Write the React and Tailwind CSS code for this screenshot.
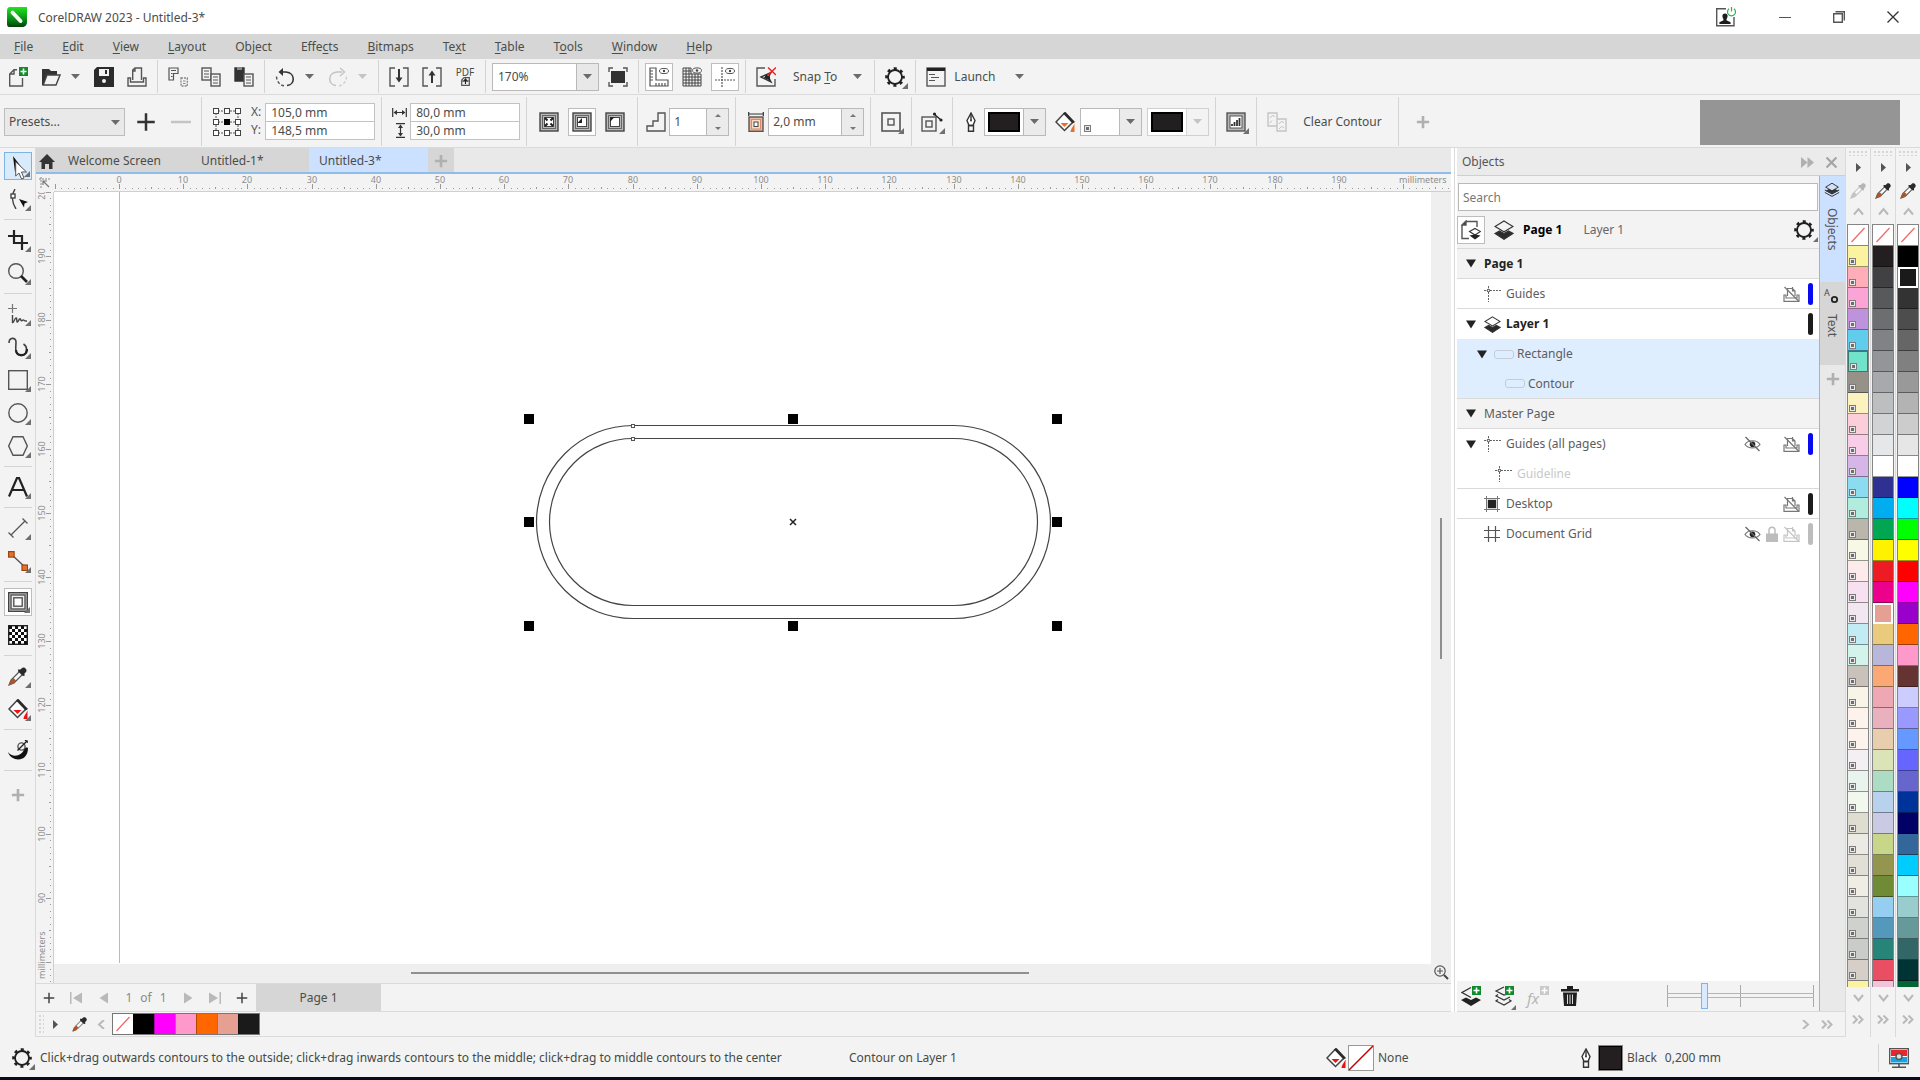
import React from "react";

const Svg = ({ w = 20, h = 20, children, className = "" }) => (
  <svg
    width={w}
    height={h}
    viewBox={`0 0 ${w} ${h}`}
    fill="none"
    stroke="#555"
    strokeWidth="1.4"
    className={"shrink-0 " + className}
    aria-hidden="true"
  >
    {children}
  </svg>
);

const Corner = () => (
  <svg width="6" height="6" className="absolute bottom-0.5 right-px" aria-hidden="true">
    <path d="M6 0V6H0Z" fill="#6f6f6f" />
  </svg>
);

const Down = ({ light, className = "" }) => (
  <svg width="9" height="5" className={"shrink-0 " + className} aria-hidden="true">
    <path d="M0 0H9L4.500 5Z" fill={light ? "#c4c4c4" : "#6b6b6b"} />
  </svg>
);

const Btn = ({ label, active, corner, children }) => (
  <button
    type="button"
    aria-label={label}
    className={
      "relative flex size-7 shrink-0 items-center justify-center " +
      (active === "blue"
        ? "border border-[#7db4e6] bg-[#d9eafb]"
        : active
          ? "border border-[#bdbdbd] bg-white"
          : "")
    }
  >
    {children}
    {corner && <Corner />}
  </button>
);

const ArrowBtn = ({ label, light }) => (
  <button type="button" aria-label={label} className="flex h-7 w-5 items-center justify-center">
    <Down light={light} />
  </button>
);

const Sep = () => (
  <div className="flex w-[3px] shrink-0 justify-center self-stretch py-px">
    <div className="w-px bg-[#d4d4d4]" />
  </div>
);

/* ---------- icons ---------- */
const Gear = ({ s = 20 }) => (
  <svg width={s} height={s} viewBox="0 0 20 20" fill="none" stroke="#1f1f1f" aria-hidden="true">
    <circle cx="10" cy="10" r="7" strokeWidth="1.8" />
    <circle cx="10" cy="10" r="8.4" strokeWidth="2.8" strokeDasharray="3 3.597" strokeDashoffset="1.5" />
  </svg>
);
const Dropper = ({ s = 20, light }) => {
  const d = light ? "#b5b5b5" : "#2b2b2b";
  return (
    <svg width={s} height={s} viewBox="0 0 20 20" fill="none" aria-hidden="true">
      <path d="M12 5L3 14L1 19L6 17L15 8Z" fill="#f6f6f6" stroke={light ? "#c4c4c4" : "#555"} strokeWidth="1.2" />
      <path d="M5.500 12L8 14.500L5.500 17.200L1 19L2.800 14.500Z" fill={light ? "#c4c4c4" : "#b3541e"} />
      <path d="M10 3.500L12.500 3.500L14 2C16 0 20 3.500 18 6L16.500 7.500V10L14.500 9.800L10.200 5.500Z" fill={d} />
    </svg>
  );
};
const Bucket = ({ s = 20, color = "#e11" }) => (
  <svg width={s} height={s} viewBox="0 0 20 20" fill="none" aria-hidden="true">
    <path d="M9.500 1L18 10L9.500 18.500L1 10Z" fill="#fff" stroke="#444" strokeWidth="1.5" />
    <path d="M8 1.500L10.500 0L20 10L17.500 11.500Z" fill="#2b2b2b" />
    <path d="M5.500 11H13.500L9.500 15Z" fill={color} />
    <path d="M19.500 11.500V20H15.500C15.500 17 18 15 19.500 11.500Z" fill={color} />
  </svg>
);
const Pen = () => (
  <Svg w={12} h={20}>
    <path d="M6 1L2 8.500L4 13.500H8L10 8.500Z" fill="#fff" stroke="#333" />
    <path d="M6 1V8" stroke="#333" />
    <circle cx="6" cy="8.500" r="1" fill="#333" stroke="none" />
    <path d="M3.500 13.500H8.500V19.300H3.500Z" stroke="#333" />
  </Svg>
);
const Layers = ({ s = 20, all, lines }) => (
  <svg width={s} height={s} viewBox="0 0 20 20" fill="none" stroke="#333" strokeWidth="1.2" aria-hidden="true">
    {lines ? (
      <>
        <path d="M1 13L10 18L19 13M1 10L10 15L19 10" />
        <path d="M3 11L10 7.500L17 11L10 14.500Z" fill="#333" />
        <path d="M10 1.500L18 6.500L10 11L2 6.500Z" fill="#cfe1fb" />
      </>
    ) : (
      <>
        <path d="M1 13.500L5.500 11L10 13.500L14.500 11L19 13.500L10 19.300Z" fill="#2b2b2b" />
        <path d="M10 1L19 6.500L10 11.800L1 6.500Z" fill={all ? "#f3f3f3" : "#fff"} />
      </>
    )}
  </svg>
);
const Plus = ({ s = 16, c = "#b0b0b0", w = 3 }) => (
  <svg width={s} height={s} viewBox="0 0 16 16" stroke={c} strokeWidth={w} aria-hidden="true">
    <path d="M8 1V15M1 8H15" />
  </svg>
);
const GreenPlus = ({ x = 11, y = 0, c = "#118a2c" }) => (
  <>
    <rect x={x} y={y} width="9" height="9" fill={c} stroke="none" />
    <path d={`M${x + 4.5} ${y + 1.5}V${y + 7.5}M${x + 1.5} ${y + 4.5}H${x + 7.5}`} stroke="#fff" strokeWidth="1.6" />
  </>
);
const PageLines = ({ x, y, fill = "#f3f3f3" }) => (
  <>
    <rect x={x} y={y} width="9" height="12" fill={fill} stroke="#555" />
    <path d={`M${x + 2} ${y + 3}H${x + 7}M${x + 2} ${y + 6}H${x + 7}M${x + 2} ${y + 9}H${x + 7}`} strokeWidth="1" />
  </>
);
const Contour = ({ kind }) => (
  <Svg>
    <rect x="1" y="1" width="18" height="18" fill="#b9b9b9" stroke="#444" />
    <rect x="3.500" y="3.500" width="13" height="13" fill="#b9b9b9" stroke="#666" strokeWidth="1" />
    <rect x="5.500" y="5.500" width="9" height="9" fill="#fff" stroke="#444" strokeWidth="1" />
    {kind === "center" && (
      <path d="M6 6L8.500 8.500M14 6L11.500 8.500M6 14L8.500 11.500M14 14L11.500 11.500" stroke="#222" strokeWidth="2" />
    )}
    {kind === "inside" && <path d="M5.500 11H10V6Z" fill="#222" stroke="none" />}
    {kind === "outside" && <path d="M5 5H9.500L5 10Z" fill="#222" stroke="none" />}
  </Svg>
);
const Eye = () => (
  <Svg w={17} h={16}>
    <path d="M1 8.500C4 3.500 13 3.500 16 8.500C13 13 4 13 1 8.500Z" stroke="#777" strokeWidth="1.200" />
    <circle cx="8.500" cy="8.200" r="2.800" fill="#222" stroke="none" />
    <path d="M1.500 1L15.500 15" stroke="#666" strokeWidth="1.200" />
  </Svg>
);
const Lock = () => (
  <Svg w={12} h={16}>
    <path d="M3 8V4.500C3 0 9 0 9 4.500V8" stroke="#bdbdbd" strokeWidth="1.500" />
    <rect x="0" y="7.500" width="12" height="8.500" fill="#bdbdbd" stroke="none" />
  </Svg>
);
const NoPrint = ({ light }) => (
  <Svg w={17} h={16}>
    <g stroke={light ? "#c4c4c4" : "#777"} strokeWidth="1.200">
      <path d="M4.500 10V2.500H9.500L12 5V10M9.500 1V5H12" />
      <path d="M1 9H3V12H14V9H16V15.300H1Z" />
      <path d="M1.500 1L15.500 15" />
    </g>
  </Svg>
);
const Guide = () => (
  <Svg w={17} h={16}>
    <path d="M0 4.500H17" stroke="#666" strokeWidth="1" strokeDasharray="2 1" />
    <path d="M4.500 0V16" stroke="#666" strokeWidth="1" strokeDasharray="2 1" />
    <circle cx="4.500" cy="4.500" r="1.300" fill="#fff" stroke="#333" strokeWidth="1" />
  </Svg>
);
const GridIc = () => (
  <Svg w={17} h={16}>
    <path d="M0 4.500H16M0 11.500H16M4.500 0V16M11.500 0V16" stroke="#555" strokeWidth="1.200" />
  </Svg>
);
const DesktopIc = () => (
  <Svg w={17} h={16}>
    <path d="M0 2.500H16M0 13.500H16M2.500 0V16M13.500 0V16" stroke="#777" strokeWidth="1" />
    <rect x="4.500" y="4.500" width="7" height="7" fill="#222" stroke="#222" />
  </Svg>
);
const ObjRect = () => <span className="h-[9px] w-5 shrink-0 rounded-[3px] border border-[#c3ccd8]" />;

const SpotMark = () => (
  <span className="flex size-[7px] items-center justify-center self-end border border-[#7c7c7c] bg-[#e9e9e9]">
    <span className="size-[3px] bg-[#6e6e6e]" />
  </span>
);

/* ---------- top bars ---------- */
function TitleBar() {
  return (
    <header className="flex h-[34px] shrink-0 items-center bg-white pl-[7px]">
      <svg width="20" height="20" viewBox="0 0 20 20" aria-hidden="true">
        <defs>
          <linearGradient id="logo" x1="0" y1="0" x2="0" y2="1">
            <stop offset="0" stopColor="#1fe51f" />
            <stop offset="0.600" stopColor="#078f17" />
            <stop offset="1" stopColor="#03400b" />
          </linearGradient>
        </defs>
        <path d="M3 0H20V15C20 18 18 20 15 20H2C1 20 0 19 0 17V4C0 1.500 1 0 3 0Z" fill="url(#logo)" />
        <path d="M5.500 5.500L13.500 14" stroke="#f4fff2" strokeWidth="4" strokeLinecap="round" />
      </svg>
      <h1 className="ml-[11px] flex-1 pt-px">CorelDRAW 2023 - Untitled-3*</h1>
      <button type="button" aria-label="Account" className="mr-3 flex w-10 justify-center">
        <Svg w={22} h={20}>
          <path d="M11 1.700H1.700V18.700H19V10" stroke="#555" />
          <path d="M10 6.500a2.600 2.600 0 0 1 2.600 2.600c0 2-1.200 2.800-1.200 4.200l4.200 2v1.700H4.400v-1.700l4.200-2c0-1.400-1.200-2.200-1.200-4.200A2.600 2.600 0 0 1 10 6.500Z" fill="#1d1d1d" stroke="none" />
          <path d="M14 1.800a4 4 0 1 0 5 0M16.500 0V4.500" stroke="#2fae4f" strokeWidth="1.200" />
        </Svg>
      </button>
      <button type="button" aria-label="Minimize" className="flex h-full w-[54px] items-center justify-center">
        <Svg w={12} h={12}>
          <path d="M0 6.500H12" strokeWidth="1" />
        </Svg>
      </button>
      <button type="button" aria-label="Restore" className="flex h-full w-[54px] items-center justify-center">
        <Svg w={12} h={12}>
          <path d="M0.700 2.700H9.300V11.300H0.700ZM2.500 0.700H11.300V9.500" />
        </Svg>
      </button>
      <button type="button" aria-label="Close" className="flex h-full w-[54px] items-center justify-center">
        <Svg w={12} h={12}>
          <path d="M0.500 0.500L11.500 11.500M11.500 0.500L0.500 11.500" stroke="#333" strokeWidth="1.300" />
        </Svg>
      </button>
    </header>
  );
}

const menus = [
  ["", "F", "ile"],
  ["", "E", "dit"],
  ["", "V", "iew"],
  ["", "L", "ayout"],
  ["Ob", "j", "ect"],
  ["Effe", "c", "ts"],
  ["", "B", "itmaps"],
  ["Te", "x", "t"],
  ["", "T", "able"],
  ["T", "o", "ols"],
  ["", "W", "indow"],
  ["", "H", "elp"],
];

function MenuBar() {
  return (
    <nav className="flex h-[25px] shrink-0 items-center gap-[29px] bg-[#d6d6d6] pl-3.5 pt-px">
      {menus.map(([a, k, b]) => (
        <button type="button" key={a + k + b}>
          {a}
          <span className="underline underline-offset-2">{k}</span>
          {b}
        </button>
      ))}
    </nav>
  );
}

function StandardBar() {
  return (
    <div className="flex h-9 shrink-0 items-center gap-[5px] border-b border-[#dadada] pl-1">
      <Btn label="New">
        <Svg>
          <path d="M9 2.700H6L1.700 7V19H14.500V11M6 3V7H2" />
          <GreenPlus />
        </Svg>
      </Btn>
      <div className="flex">
        <Btn label="Open">
          <Svg>
            <path d="M1 18V2H8L10 4H16V8H6L2.500 18Z" fill="#333" stroke="none" />
            <path d="M6 8H19L15 18H2.200Z" fill="#f3f3f3" stroke="#444" />
          </Svg>
        </Btn>
        <ArrowBtn label="Recent files" />
      </div>
      <Btn label="Save">
        <Svg>
          <path d="M3 0H20V20H0V3Z" fill="#2b2b2b" stroke="none" />
          <path d="M5 2H15V9H5Z" fill="#f3f3f3" stroke="none" />
          <rect x="11" y="3" width="2" height="4" fill="#2b2b2b" stroke="none" />
          <circle cx="10" cy="14" r="2" fill="#f3f3f3" stroke="none" />
        </Svg>
      </Btn>
      <Btn label="Print">
        <Svg>
          <path d="M5.700 13V3L8 1H14.500V13M8 1V4H6" />
          <path d="M1 11H3.500V15H16.500V11H19V19H1Z" />
        </Svg>
      </Btn>
      <Sep />
      <Btn label="Cut">
        <Svg>
          <path d="M1 1H10V6.500H5.500V13H1ZM3 3.500H8M3 6.500H4.500M3 9.500H4.500" strokeWidth="1.200" />
          <path d="M13 11H19.300V19H13Z" stroke="#888" strokeDasharray="2 1" />
          <path d="M15 14H17.500M15 16.500H17.500" stroke="#888" strokeWidth="1" />
        </Svg>
      </Btn>
      <Btn label="Copy">
        <Svg>
          <PageLines x={1} y={1} />
          <PageLines x={10} y={7} />
        </Svg>
      </Btn>
      <Btn label="Paste">
        <Svg>
          <path d="M1 1H10V14H1Z" fill="#333" stroke="#333" />
          <rect x="3" y="0" width="5" height="3" fill="#888" stroke="none" />
          <PageLines x={10} y={7} />
        </Svg>
      </Btn>
      <Sep />
      <div className="flex">
        <Btn label="Undo">
          <Svg>
            <path d="M6 5H11C21 6 20 18 12 18.500" stroke="#333" strokeWidth="1.600" />
            <path d="M8 1L3.500 5L8 9Z" fill="#333" stroke="none" />
            <path d="M1.500 9.500C1.500 14 5 18.500 9 18.800" strokeDasharray="3 2" />
          </Svg>
        </Btn>
        <ArrowBtn label="Undo history" />
      </div>
      <div className="flex">
        <Btn label="Redo">
          <Svg>
            <path d="M14 5H9C-1 6 0 18 8 18.500" stroke="#c4c4c4" strokeWidth="1.600" />
            <path d="M12 1L16.500 5L12 9" stroke="#c4c4c4" />
            <path d="M18.500 9.500C18.500 14 15 18.500 11 18.800" stroke="#cfcfcf" strokeDasharray="3 2" />
          </Svg>
        </Btn>
        <ArrowBtn label="Redo history" light />
      </div>
      <Sep />
      <Btn label="Import">
        <Svg>
          <path d="M6 1H1V19H6M14 1H19V19H14" />
          <path d="M10 2V12" stroke="#333" strokeWidth="2" />
          <path d="M6.500 10.500H13.500L10 15.500Z" fill="#333" stroke="none" />
        </Svg>
      </Btn>
      <Btn label="Export">
        <Svg>
          <path d="M6 1H1V19H6M14 1H19V19H14" />
          <path d="M10 16V7" stroke="#333" strokeWidth="2" />
          <path d="M6.500 8.500H13.500L10 3.500Z" fill="#333" stroke="none" />
        </Svg>
      </Btn>
      <button type="button" aria-label="Publish to PDF" className="flex size-7 shrink-0 flex-col items-center justify-center text-[10px] leading-[10px]">
        PDF
        <Svg w={9} h={9}>
          <path d="M3 0.700H8.300V8.300H0.700V3ZM0.700 4H8" strokeWidth="1.200" />
          <path d="M4.500 2V7M2.500 4.500L4.500 2L6.500 4.500" stroke="#222" strokeWidth="1.200" />
        </Svg>
      </button>
      <Sep />
      <div className="relative w-[107px]">
        <select aria-label="Zoom level" className="h-7 w-full appearance-none border border-[#b9b9b9] bg-white pl-[5px]">
          <option>170%</option>
        </select>
        <span className="pointer-events-none absolute inset-y-px right-px flex w-[22px] items-center justify-center border-l border-[#b9b9b9] bg-[#e8e8e8]">
          <Down />
        </span>
      </div>
      <Btn label="Full screen preview">
        <Svg>
          <rect x="3" y="4" width="14" height="12" fill="#333" stroke="none" />
          <path d="M5 1H1V5M15 1H19V5M5 19H1V15M15 19H19V15" />
        </Svg>
      </Btn>
      <Sep />
      <Btn label="Show rulers" active>
        <Svg>
          <path d="M1 1H7V13H19V19H1ZM1 4H4M1 7H4M1 10H4M1 13H4M7 19V16M10 19V16M13 19V16M16 19V16" strokeWidth="1.200" />
          <ellipse cx="15" cy="4" rx="4.500" ry="2.600" strokeWidth="1" />
          <circle cx="15" cy="4" r="1.200" fill="#444" stroke="none" />
        </Svg>
      </Btn>
      <Btn label="Show grid">
        <Svg>
          <path d="M1 1H9V7H19V19H1ZM1 4H9M1 7H9M1 10H19M1 13H19M1 16H19M4 1V19M7 1V19M10 7V19M13 7V19M16 7V19" stroke="#444" strokeWidth="1" />
          <ellipse cx="15" cy="3.500" rx="4.500" ry="2.600" strokeWidth="1" />
          <circle cx="15" cy="3.500" r="1.200" fill="#444" stroke="none" />
        </Svg>
      </Btn>
      <Btn label="Show guidelines" active>
        <Svg>
          <path d="M7 0V20M0 13H20" strokeDasharray="2 1" strokeWidth="1.200" />
          <ellipse cx="15" cy="4" rx="4.500" ry="2.600" strokeWidth="1" />
          <circle cx="15" cy="4" r="1.200" fill="#444" stroke="none" />
        </Svg>
      </Btn>
      <Sep />
      <Btn label="Snap off">
        <Svg>
          <path d="M9 1H1V19H19V12" />
          <path d="M5 10L15 5.500L12.500 10L15 15Z" fill="#f3f3f3" stroke="#333" />
          <path d="M10 7.500L14 9.500V13.500L8 11Z" fill="#222" stroke="none" />
          <path d="M12 0.500L20 8M20 0.500L12 8" stroke="#e22" />
        </Svg>
      </Btn>
      <button type="button" className="flex h-7 items-center gap-4 pl-2 pr-1.5">
        <span>
          Snap <span className="underline underline-offset-2">T</span>o
        </span>
        <Down />
      </button>
      <Sep />
      <Btn label="Options" corner>
        <Gear />
      </Btn>
      <Sep />
      <button type="button" className="flex h-7 items-center gap-2 pl-1">
        <Svg>
          <rect x="1" y="1" width="18" height="18" />
          <path d="M1 2.500H19" stroke="#222" strokeWidth="3" />
          <path d="M3 7.500H9M5 10.500H13M3 13.500H9" strokeWidth="1.200" />
        </Svg>
        Launch
        <Down className="ml-3" />
      </button>
    </div>
  );
}

const Field = ({ label, value }) => (
  <input
    aria-label={label}
    defaultValue={value}
    className="h-[19px] w-[110px] border border-[#c3c3c3] bg-white pl-[5px] leading-4 outline-none"
  />
);

const Spinner = ({ label, value, w }) => (
  <div className="flex h-7 border border-[#b9b9b9]">
    <input aria-label={label} defaultValue={value} className={w + " bg-white pl-1 outline-none"} />
    <div className="flex w-[22px] flex-col border-l border-[#b9b9b9] bg-[#ebebeb]">
      <button type="button" aria-label={label + " up"} className="flex flex-1 items-center justify-center">
        <svg width="6" height="3" aria-hidden="true">
          <path d="M0 3H6L3 0Z" fill="#777" />
        </svg>
      </button>
      <button type="button" aria-label={label + " down"} className="flex flex-1 items-center justify-center">
        <svg width="6" height="3" aria-hidden="true">
          <path d="M0 0H6L3 3Z" fill="#777" />
        </svg>
      </button>
    </div>
  </div>
);

const ColorCombo = ({ label, none, disabled }) => (
  <button type="button" aria-label={label} className={"flex h-7 w-[62px] shrink-0 border bg-white " + (disabled ? "border-[#d0d0d0]" : "border-[#b9b9b9]")}>
    <span className="flex flex-1 self-stretch p-[3px]">
      {none ? <SpotMark /> : <span className="flex-1 border-2 border-black bg-[#231f20]" />}
    </span>
    <span className={"flex w-[22px] items-center justify-center self-stretch border-l " + (disabled ? "border-[#d8d8d8] bg-[#f3f3f3]" : "border-[#b9b9b9] bg-[#ebebeb]")}>
      <Down light={disabled} />
    </span>
  </button>
);

function PropertyBar() {
  return (
    <div className="flex h-[53px] shrink-0 items-center gap-[5px] border-b border-[#dadada] pl-1 pt-px">
      <div className="relative w-[121px] shrink-0">
        <select aria-label="Presets" className="h-7 w-full appearance-none border border-[#bdbdbd] bg-[#e9e9e9] pl-1">
          <option>Presets...</option>
        </select>
        <Down className="pointer-events-none absolute right-[5px] top-3" />
      </div>
      <button type="button" aria-label="Add preset" className="flex size-8 items-center justify-center">
        <Plus s={20} c="#333" w={2} />
      </button>
      <button type="button" aria-label="Delete preset" className="flex size-7 items-center justify-center">
        <Svg>
          <path d="M0 10H20" stroke="#c4c4c4" strokeWidth="2.500" />
        </Svg>
      </button>
      <Sep />
      <button type="button" aria-label="Object origin" className="ml-1 mr-1 flex size-[30px] shrink-0 items-center justify-center">
        <Svg w={30} h={30}>
          <path d="M3 4H27M3 15H27M3 26H27M4 3V27M26 3V27" strokeWidth="1" strokeDasharray="2 1" />
          {[1, 12, 23].map((x) =>
            [1, 12, 23].map((y) => (
              <rect key={x + "-" + y} x={x + 0.5} y={y + 0.5} width="5" height="5" fill={x === 12 && y === 12 ? "#000" : "#fff"} stroke={x === 12 && y === 12 ? "#000" : "#444"} strokeWidth="1" />
            )),
          )}
        </Svg>
      </button>
      <div className="flex gap-1">
        <div className="flex flex-col text-[#555]">
          <span className="flex h-[18px] items-center">X:</span>
          <span className="flex h-[18px] items-center">Y:</span>
        </div>
        <div className="flex flex-col -space-y-px">
          <Field label="X position" value="105,0 mm" />
          <Field label="Y position" value="148,5 mm" />
        </div>
      </div>
      <Sep />
      <div className="flex gap-0.5 pl-1">
        <div className="flex w-4 flex-col">
          <span className="flex h-[18px] items-center">
            <Svg w={15} h={9}>
              <path d="M0.700 0V9M14.300 0V9M2 4.500H13" stroke="#333" strokeWidth="1.200" />
              <path d="M5 2V7L1.500 4.500ZM10 2V7L13.500 4.500Z" fill="#333" stroke="none" />
            </Svg>
          </span>
          <span className="flex h-[18px] items-center justify-center">
            <Svg w={9} h={15}>
              <path d="M0 0.700H9M0 14.300H9M4.500 2V13" stroke="#333" strokeWidth="1.200" />
              <path d="M2 5H7L4.500 1.500ZM2 10H7L4.500 13.500Z" fill="#333" stroke="none" />
            </Svg>
          </span>
        </div>
        <div className="flex flex-col -space-y-px">
          <Field label="Width" value="80,0 mm" />
          <Field label="Height" value="30,0 mm" />
        </div>
      </div>
      <Sep />
      <div className="flex gap-[5px] px-0.5">
        <Btn label="To center">
          <Contour kind="center" />
        </Btn>
        <Btn label="Inside contour" active>
          <Contour kind="inside" />
        </Btn>
        <Btn label="Outside contour">
          <Contour kind="outside" />
        </Btn>
      </div>
      <Sep />
      <div className="ml-0.5 flex items-center gap-[3px]">
        <Svg>
          <path d="M1 19V14H7V9H12V1H19V19Z" />
        </Svg>
        <Spinner label="Contour steps" value="1" w="w-9" />
      </div>
      <Sep />
      <div className="ml-1.5 flex items-center gap-1">
        <Svg w={16}>
          <path d="M0.700 0V4M15.300 0V4M1 2H15" stroke="#333" strokeWidth="1.200" />
          <rect x="1" y="5" width="14" height="14.300" fill="#f0b79c" stroke="#555" />
          <rect x="3.500" y="7.500" width="9" height="9.500" fill="#f8dccb" stroke="#d98c66" strokeWidth="1" />
          <rect x="6" y="10" width="4" height="4.500" fill="#fff" stroke="#444" strokeWidth="1" />
        </Svg>
        <Spinner label="Contour offset" value="2,0 mm" w="w-[72px]" />
      </div>
      <Sep />
      <Btn label="Contour corners" corner>
        <Svg>
          <rect x="1" y="1" width="18" height="18" strokeWidth="1.600" />
          <rect x="7" y="7" width="6" height="6" />
        </Svg>
      </Btn>
      <Sep />
      <Btn label="Object and color acceleration" corner>
        <Svg w={22}>
          <rect x="1" y="5" width="14" height="14" />
          <rect x="5" y="9" width="6" height="6" />
          <path d="M13 2L20 8" stroke="#222" />
          <circle cx="13.500" cy="2" r="1.600" fill="#222" stroke="none" />
          <circle cx="20" cy="8" r="1.600" fill="#222" stroke="none" />
        </Svg>
      </Btn>
      <Sep />
      <div className="flex items-center gap-[5px] pl-1">
        <span className="flex w-4 justify-center">
          <Pen />
        </span>
        <ColorCombo label="Outline color" />
        <span className="ml-1">
          <Bucket color="#e8702a" />
        </span>
        <ColorCombo label="Fill color" none />
        <ColorCombo label="Last fill color" disabled />
      </div>
      <Sep />
      <Btn label="Copy contour properties" corner>
        <Svg>
          <rect x="1" y="1" width="18" height="18" fill="#b5b5b5" stroke="#555" />
          <rect x="4" y="4" width="12" height="12" fill="#fff" stroke="#555" strokeWidth="1" />
          <path d="M6 14V12M8.500 14V10M11 14V8M13.500 14V6" stroke="#333" strokeWidth="1.800" />
        </Svg>
      </Btn>
      <Sep />
      <button type="button" className="flex h-7 items-center gap-4 pl-1 pr-2.5">
        <Svg>
          <path d="M1 1H10V14H1ZM10 7H19V19H10Z" stroke="#c4c4c4" />
          <path d="M3 6L5 3.500L8 4.500M3 11L5 8.500M12 12L14 9.500L17 10.500M12 17L14.500 14.500L17 15.500" stroke="#c4c4c4" strokeWidth="1" />
        </Svg>
        Clear Contour
      </button>
      <Sep />
      <button type="button" aria-label="Customize toolbar" className="ml-1 flex size-7 items-center justify-center">
        <Plus s={14} />
      </button>
      <div className="ml-auto mr-5 mt-0.5 h-[45px] w-[200px] bg-[#959595]" />
    </div>
  );
}

/* ---------- toolbox ---------- */
const Cursor = () => (
  <svg width="13" height="19" viewBox="0 0 13 19" className="absolute left-2.5 top-2" aria-hidden="true">
    <path d="M0.700 0.700V15L4 12L6.500 18L9 17L6.500 11H11.500Z" fill="#fff" stroke="#555" strokeWidth="1" />
  </svg>
);

function HSep() {
  return (
    <div className="flex h-[3px] w-7 shrink-0 items-center">
      <div className="h-px w-full bg-[#d4d4d4]" />
    </div>
  );
}

function Toolbox() {
  return (
    <aside className="flex w-9 shrink-0 flex-col items-center gap-[5px] border-r border-[#dadada] pt-1">
      <Btn label="Pick tool" active="blue" corner>
        <Svg>
          <path d="M5 0L14 12L9.500 11.500L7 16Z" fill="#111" stroke="none" />
        </Svg>
        <Cursor />
      </Btn>
      <Btn label="Shape tool" corner>
        <Svg>
          <path d="M7 0C3 6 4 14 8 20" stroke="#444" />
          <rect x="3" y="5" width="4" height="4" fill="#fff" stroke="#444" />
          <path d="M11 10L20 13L16.500 14.500L16 18.500Z" fill="#111" stroke="none" />
        </Svg>
      </Btn>
      <HSep />
      <Btn label="Crop tool" corner>
        <Svg>
          <path d="M6 0V13H20M0 6H14V20" stroke="#222" strokeWidth="2.200" />
        </Svg>
      </Btn>
      <Btn label="Zoom tool" corner>
        <Svg>
          <circle cx="8" cy="8" r="7.300" />
          <path d="M13 13L19 19" stroke="#222" strokeWidth="2.600" />
        </Svg>
      </Btn>
      <HSep />
      <Btn label="Freehand tool" corner>
        <Svg>
          <path d="M4.500 0V9M0 4.500H9" stroke="#777" strokeWidth="1.200" />
          <path d="M4.500 11V18.500C6 19 7 13 8.500 14C9 15 8.500 18.500 9.500 18C11 17 11 14 12.500 15C13 17 13.500 17.500 15 16C16 15.500 16 17.500 19 17" stroke="#444" />
        </Svg>
      </Btn>
      <Btn label="Artistic media tool" corner>
        <Svg>
          <path d="M1 6C1 0 8 0 8 5C8 10 6 18 12.500 18.500C19 19 20.500 10 15.500 7" strokeWidth="1.600" stroke="#444" />
          <path d="M8 13C8.500 20 19 20 19 12" strokeWidth="2.200" stroke="#222" />
        </Svg>
      </Btn>
      <Btn label="Rectangle tool" corner>
        <Svg>
          <rect x="0.700" y="0.700" width="18.600" height="18.600" />
        </Svg>
      </Btn>
      <Btn label="Ellipse tool" corner>
        <Svg>
          <circle cx="10" cy="10" r="9.200" />
        </Svg>
      </Btn>
      <Btn label="Polygon tool" corner>
        <Svg>
          <path d="M5 0.700H15L19.300 10L15 19.300H5L0.700 10Z" />
        </Svg>
      </Btn>
      <HSep />
      <Btn label="Text tool" corner>
        <Svg>
          <path d="M1 19.500L9 1H11L19 19.500M4 13H16" stroke="#222" strokeWidth="2.200" />
        </Svg>
      </Btn>
      <HSep />
      <Btn label="Dimension tool" corner>
        <Svg>
          <path d="M3 17L17 3M0.500 14.500L5.500 19.500M14.500 0.500L19.500 5.500" strokeWidth="1.300" />
        </Svg>
      </Btn>
      <Btn label="Connector tool" corner>
        <Svg>
          <path d="M4 4L17 16" />
          <rect x="0.600" y="0.600" width="5.500" height="5.500" fill="#e8702a" stroke="#9a4614" strokeWidth="1.200" />
          <rect x="14" y="14" width="5.500" height="5.500" fill="#e8702a" stroke="#9a4614" strokeWidth="1.200" />
        </Svg>
      </Btn>
      <HSep />
      <Btn label="Contour tool" active corner>
        <Svg>
          <rect x="0.700" y="0.700" width="18.600" height="18.600" fill="#ccc" stroke="#444" />
          <rect x="3" y="3" width="14" height="14" fill="#eee" stroke="#555" />
          <rect x="5.800" y="5.800" width="8.400" height="8.400" fill="#fff" stroke="#555" />
        </Svg>
      </Btn>
      <Btn label="Transparency tool">
        <Svg>
          <rect x="0.700" y="0.700" width="18.600" height="18.600" fill="#fff" stroke="#222" />
          {[0, 1, 2, 3, 4, 5].map((r) =>
            [0, 1, 2].map((c) => (
              <rect key={r + "-" + c} x={1 + c * 6 + (r % 2) * 3} y={1 + r * 3} width="3" height="3" fill="#111" stroke="none" />
            )),
          )}
        </Svg>
      </Btn>
      <HSep />
      <Btn label="Eyedropper tool" corner>
        <Dropper />
      </Btn>
      <Btn label="Interactive fill tool" corner>
        <Bucket />
      </Btn>
      <HSep />
      <Btn label="Smart drawing tool">
        <Svg>
          <path d="M0 12C3 22 20 23 20 8C18 7 17 8 16 9C15 15 5 19 0 12Z" fill="#111" stroke="none" />
          <circle cx="13.500" cy="6.500" r="3.600" />
          <path d="M19.500 0.500L9.500 10.500M17 0L20 2.500" stroke="#222" />
        </Svg>
      </Btn>
      <HSep />
      <button type="button" aria-label="Customize toolbox" className="flex h-9 w-7 items-center justify-center">
        <Plus s={14} />
      </button>
    </aside>
  );
}

/* ---------- document area ---------- */
const MM = 6.42;

function Tabs() {
  return (
    <div role="tablist" className="flex h-[26px] shrink-0 border-b-2 border-[#8fbdea] bg-[#e9e9e9]">
      <button type="button" aria-label="Home" className="flex w-[22px] items-center justify-center bg-[#d6d6d6] pt-0.5">
        <svg width="16" height="15" viewBox="0 0 16 15" aria-hidden="true">
          <path d="M8 0L16 8H13.500V15H10V10H6V15H2.500V8H0Z" fill="#333" />
        </svg>
      </button>
      <button type="button" role="tab" className="w-[133px] bg-[#d6d6d6] pl-2.5 pt-0.5 text-left">Welcome Screen</button>
      <button type="button" role="tab" className="w-[118px] bg-[#d6d6d6] pl-2.5 pt-0.5 text-left">Untitled-1*</button>
      <button type="button" role="tab" aria-selected="true" className="w-[119px] bg-[#cce0ff] pl-2.5 pt-0.5 text-left">Untitled-3*</button>
      <button type="button" aria-label="New document" className="flex w-[26px] items-center justify-center bg-[#d6d6d6] pt-0.5">
        <Plus s={14} />
      </button>
    </div>
  );
}

function HRuler() {
  const ticks = Array.from({ length: 220 }, (_, i) => i - 10);
  return (
    <svg className="h-[18px] min-w-0 flex-1 border-b border-[#cfcfcf] bg-[#f3f3f3]" aria-label="Horizontal ruler">
      {ticks.map((mm) => {
        const x = Math.round(65 + mm * MM);
        const h = mm % 10 === 0 ? 5 : mm % 5 === 0 ? 2 : 1;
        return <rect key={mm} x={x} y={15 - h} width="1" height={h} fill="#9a9a9a" />;
      })}
      {Array.from({ length: 20 }, (_, i) => i * 10).map((v) => (
        <text key={v} x={Math.round(65 + v * MM)} y="9" textAnchor="middle" fontSize="9" fill="#8e8e8e">
          {v}
        </text>
      ))}
      <text x="1345" y="9" fontSize="9" fill="#8e8e8e">millimeters</text>
    </svg>
  );
}

function VRuler() {
  const y = (v) => Math.round(64 + (190 - v) * MM);
  const ticks = Array.from({ length: 125 }, (_, i) => 200 - i);
  return (
    <svg className="w-[18px] shrink-0 border-r border-[#cfcfcf] bg-[#f3f3f3]" aria-label="Vertical ruler">
      {ticks.map((mm) => {
        const w = mm % 10 === 0 ? 5 : mm % 5 === 0 ? 2 : 1;
        return <rect key={mm} x={15 - w} y={y(mm)} width={w} height="1" fill="#9a9a9a" />;
      })}
      {Array.from({ length: 12 }, (_, i) => 200 - i * 10).map((v) => (
        <text key={v} transform={`translate(9 ${y(v)}) rotate(-90)`} textAnchor="middle" fontSize="9" fill="#8e8e8e">
          {v}
        </text>
      ))}
      <text transform="translate(9 787) rotate(-90)" fontSize="9" fill="#8e8e8e">millimeters</text>
    </svg>
  );
}

function Artboard() {
  const handles = [
    [475, 227], [739, 227], [1003, 227],
    [475, 330], [1003, 330],
    [475, 434], [739, 434], [1003, 434],
  ];
  return (
    <svg className="min-h-0 min-w-0 flex-1 bg-white" aria-label="Drawing page">
      <rect x="65" y="0" width="1" height="771" fill="#b9b9b9" />
      <rect x="482.500" y="233.500" width="514" height="193" rx="96.500" fill="none" stroke="#444" strokeWidth="1.200" />
      <rect x="495.500" y="246.500" width="488" height="167" rx="83.500" fill="none" stroke="#444" strokeWidth="1.200" />
      <rect x="577.500" y="232.500" width="3" height="3" fill="#fff" stroke="#555" />
      <rect x="577.500" y="245.500" width="3" height="3" fill="#fff" stroke="#555" />
      {handles.map(([x, y]) => (
        <rect key={x + "-" + y} x={x - 5} y={y - 5} width="10" height="10" fill="#000" />
      ))}
      <path d="M736 327L742 333M742 327L736 333" stroke="#222" strokeWidth="1.500" />
    </svg>
  );
}

const NavIc = ({ d, label, w }) => (
  <button type="button" aria-label={label} className={w + " flex h-7 items-center justify-center"}>
    <svg width="12" height="12" viewBox="0 0 12 12" aria-hidden="true">
      <path d={d} fill="#b9b9b9" stroke="none" />
    </svg>
  </button>
);

function PageNav() {
  return (
    <div className="flex h-[29px] shrink-0 items-center border-y border-[#dadada]">
      <button type="button" aria-label="Add page before" className="flex h-7 w-[26px] items-center justify-center">
        <Plus s={12} c="#444" w={2} />
      </button>
      <NavIc label="First page" w="w-7" d="M0 0H1.500V12H0ZM12 0.500V11.500L3 6Z" />
      <NavIc label="Previous page" w="w-7" d="M10 0.500V11.500L1.500 6Z" />
      <div className="flex w-14 justify-center gap-2 text-[#8a8a8a]">
        <span>1</span>
        <span>of</span>
        <span>1</span>
      </div>
      <NavIc label="Next page" w="w-7" d="M2 0.500V11.500L10.500 6Z" />
      <NavIc label="Last page" w="w-[26px]" d="M12 0H10.500V12H12ZM0 0.500V11.500L9 6Z" />
      <button type="button" aria-label="Add page after" className="flex h-7 w-7 items-center justify-center">
        <Plus s={12} c="#444" w={2} />
      </button>
      <button type="button" className="h-full w-[125px] bg-[#d6d6d6]">Page 1</button>
    </div>
  );
}

function Workspace() {
  return (
    <main className="flex min-w-0 flex-1 flex-col">
      <Tabs />
      <div className="flex shrink-0">
        <div className="flex w-[18px] shrink-0 items-center justify-center">
          <Svg w={12} h={12}>
            <path d="M0 2H12M2 0V12" strokeDasharray="2 1" strokeWidth="1" stroke="#888" />
            <path d="M4 4L10 10M4 8V4H8" strokeWidth="1.200" stroke="#777" />
          </Svg>
        </div>
        <HRuler />
      </div>
      <div className="flex min-h-0 flex-1">
        <VRuler />
        <div className="flex min-w-0 flex-1 flex-col">
          <div className="flex min-h-0 flex-1">
            <Artboard />
            <div className="flex w-5 shrink-0 justify-center bg-[#efefef] pt-[326px]">
              <div className="h-[141px] w-0.5 bg-[#8f8f8f]" />
            </div>
          </div>
          <div className="flex h-[19px] shrink-0 items-center bg-[#efefef] pb-0.5">
            <div className="ml-[357px] h-0.5 w-[618px] bg-[#8f8f8f]" />
            <button type="button" aria-label="Navigator" className="ml-auto flex w-5 justify-center">
              <Svg w={15} h={15}>
                <circle cx="6" cy="6" r="5.200" strokeWidth="1.200" />
                <path d="M10 10L14 14" stroke="#444" strokeWidth="2" />
                <path d="M6 3V9M3 6H9" strokeWidth="1.200" />
              </Svg>
            </button>
          </div>
        </div>
      </div>
      <PageNav />
    </main>
  );
}

/* ---------- objects docker ---------- */
const Tri = () => (
  <svg width="10" height="9" className="shrink-0" aria-hidden="true">
    <path d="M0 0.500H10L5 8.500Z" fill="#222" />
  </svg>
);

const rows = [
  { t: "Page 1", head: true, bold: true, line: true },
  { t: "Guides", pad: "pl-[27px]", icon: <Guide />, print: true, bar: "bg-[#0a0af0]", line: true },
  { t: "Layer 1", pad: "pl-[9px]", tri: true, icon: <Layers s={17} />, bold: true, bar: "bg-[#1c1c1c]" },
  { t: "Rectangle", pad: "pl-5", tri: true, icon: <ObjRect />, sel: true },
  { t: "Contour", pad: "pl-12", icon: <ObjRect />, sel: true, line: true },
  { t: "Master Page", head: true, line: true },
  { t: "Guides (all pages)", pad: "pl-[9px]", tri: true, icon: <Guide />, eye: true, print: true, bar: "bg-[#0a0af0]" },
  { t: "Guideline", pad: "pl-[38px]", icon: <Guide />, dim: true, line: true },
  { t: "Desktop", pad: "pl-[27px]", icon: <DesktopIc />, print: true, bar: "bg-[#1c1c1c]", line: true },
  { t: "Document Grid", pad: "pl-[27px]", icon: <GridIc />, eye: true, lock: true, print: true, light: true, bar: "bg-[#bdbdbd]" },
];

function Row({ r }) {
  return (
    <li
      className={
        "flex h-[30px] items-center pr-1.5 " +
        (r.line ? "border-b border-[#dadada] " : "") +
        (r.sel ? "bg-[#dfeeff] " : r.head ? "bg-[#f3f3f3] " : "") +
        (r.head ? "pl-[9px]" : r.pad)
      }
    >
      {(r.tri || r.head) && (
        <button type="button" aria-label={"Collapse " + r.t} className={r.sel ? "mr-[7px]" : "mr-2"}>
          <Tri />
        </button>
      )}
      <span className={"flex items-center " + (r.sel ? "gap-[3px]" : "gap-[5px]")}>
        {r.icon}
        <span className={r.bold ? "font-bold text-[#222]" : r.dim ? "text-[#c9c9c9]" : "text-[#5c5c5c]"}>{r.t}</span>
      </span>
      <span className="ml-auto flex items-center">
        {r.eye && <Eye />}
        {r.eye && <span className="mx-[5px] flex w-3">{r.lock && <Lock />}</span>}
        {r.print && <NoPrint light={r.light} />}
        {r.bar && <span className={"ml-2 h-[22px] w-[5px] rounded-full " + r.bar} />}
      </span>
    </li>
  );
}

function ObjectsDocker() {
  return (
    <section className="flex w-[394px] shrink-0 border-l border-white bg-white">
      <div className="ml-0.5 mr-0.5 w-px shrink-0 bg-[#dadada]" />
      <div className="flex min-w-0 flex-1 flex-col border-b border-[#dadada]">
        <div className="flex h-7 shrink-0 items-center border-b border-[#cfcfcf] bg-[#ebebeb] pl-[5px] pr-2 pt-px">
          <h2 className="flex-1 text-[#555]">Objects</h2>
          <button type="button" aria-label="Collapse docker" className="mr-3">
            <svg width="13" height="11" aria-hidden="true">
              <path d="M0 0L6.500 5.500L0 11ZM6.500 0L13 5.500L6.500 11Z" fill="#b0b0b0" />
            </svg>
          </button>
          <button type="button" aria-label="Close docker">
            <svg width="11" height="11" stroke="#a5a5a5" strokeWidth="2.200" aria-hidden="true">
              <path d="M0.500 0.500L10.500 10.500M10.500 0.500L0.500 10.500" />
            </svg>
          </button>
        </div>
        <div className="flex min-h-0 flex-1">
          <div className="flex min-w-0 flex-1 flex-col">
            <div className="shrink-0 bg-[#f3f3f3] px-px pt-[7px]">
              <input aria-label="Search" placeholder="Search" className="h-7 w-full border border-[#b9b9b9] bg-white pl-1 outline-none placeholder:text-[#777]" />
            </div>
            <div className="flex h-[38px] shrink-0 items-center border-b border-[#dadada] bg-[#f3f3f3] pr-[3px] pt-px">
              <Btn label="Show pages and layers" active>
                <Svg>
                  <path d="M1 5V18.500H8M5 1.500H16V7" />
                  <path d="M1 5L5 1V5Z" fill="#333" />
                  <path d="M14 8.500L19.500 11.500L14 15L8.500 11.500Z" strokeWidth="1.100" stroke="#333" />
                  <path d="M8.500 15.500L14 14.500L19.500 15.500L14 19.500Z" fill="#222" stroke="none" />
                </Svg>
              </Btn>
              <span className="mx-[9px]">
                <Layers all />
              </span>
              <span className="font-bold text-black">Page 1</span>
              <span className="ml-[21px] flex-1 text-[#666]">Layer 1</span>
              <button type="button" aria-label="Docker options" className="relative pr-0.5">
                <Gear />
                <svg width="5" height="5" className="absolute -bottom-0.5 -right-0.5" aria-hidden="true">
                  <path d="M5 0V5H0Z" fill="#6f6f6f" />
                </svg>
              </button>
            </div>
            <ul className="min-h-0 flex-1 overflow-hidden bg-white">
              {rows.map((r) => (
                <Row key={r.t} r={r} />
              ))}
            </ul>
            <div className="flex h-[30px] shrink-0 items-center gap-[13px] bg-[#f3f3f3] pl-1 pr-[5px]">
              <button type="button" aria-label="New layer">
                <Svg>
                  <path d="M10 1.500L1 6.500L10 11.500" stroke="#333" />
                  <path d="M0 14L5 11.500L10 14L15 11.500L20 14L10 20Z" fill="#222" stroke="none" />
                  <GreenPlus />
                </Svg>
              </button>
              <button type="button" aria-label="New master layer" className="relative">
                <Svg>
                  <path d="M10 1L2 5L10 9L14 8M4 8.500L2 10L10 14L16 11M4 13.500L2 15L10 19L17 15L15 13.500" stroke="#333" strokeWidth="1.200" />
                  <GreenPlus />
                </Svg>
                <svg width="5" height="5" className="absolute -bottom-1 -right-0.5" aria-hidden="true">
                  <path d="M5 0V5H0Z" fill="#6f6f6f" />
                </svg>
              </button>
              <button type="button" aria-label="Add effect" className="relative h-5 w-5 text-left text-[15px] italic leading-6 text-[#b5b5b5]">
                <span>fx</span>
                <svg width="9" height="9" className="absolute -right-0.5 top-0" aria-hidden="true">
                  <GreenPlus x={0} c="#c9c9c9" />
                </svg>
              </button>
              <button type="button" aria-label="Delete" className="ml-px">
                <Svg w={18}>
                  <path d="M0 3H18V5.500H0ZM6 0H12V3H6ZM2 6.500H16L15 20H3Z" fill="#1f1f1f" stroke="none" />
                  <path d="M6.500 8.500V18M9 8.500V18M11.500 8.500V18" stroke="#ddd" strokeWidth="1" />
                </Svg>
              </button>
              <div className="relative ml-auto flex h-[22px] w-[147px] items-center justify-between">
                <span className="h-full w-px bg-[#a9a9a9]" />
                <span className="h-full w-px bg-[#a9a9a9]" />
                <span className="h-full w-px bg-[#a9a9a9]" />
                <span className="absolute inset-x-0 top-2 h-[5px] border-y border-[#b5b5b5]" />
                <input
                  type="range"
                  aria-label="Thumbnail size"
                  defaultValue="24"
                  className="absolute inset-x-0 -top-0.5 h-[26px] w-full appearance-none bg-transparent [&::-webkit-slider-thumb]:h-[26px] [&::-webkit-slider-thumb]:w-[7px] [&::-webkit-slider-thumb]:appearance-none [&::-webkit-slider-thumb]:border [&::-webkit-slider-thumb]:border-[#7db4f0] [&::-webkit-slider-thumb]:bg-[#d9eaff]"
                />
              </div>
            </div>
          </div>
          <div className="flex w-[26px] shrink-0 flex-col border-l border-[#86b9ee] bg-[#e9e9e9]">
            <button type="button" className="flex h-[106px] flex-col items-center gap-2.5 bg-[#cce0ff] pr-0.5 pt-1.5">
              <Layers s={16} lines />
              <span className="text-[#555] [writing-mode:vertical-rl]">Objects</span>
            </button>
            <button type="button" className="flex h-[83px] flex-col items-center gap-2.5 bg-[#d6d6d6] pr-0.5 pt-1.5">
              <span className="flex">
                <span className="text-[9px] leading-[9px]">A</span>
                <Svg w={9} h={16}>
                  <circle cx="4.500" cy="11.500" r="2.700" stroke="#222" strokeWidth="1.800" />
                </Svg>
              </span>
              <span className="text-[#555] [writing-mode:vertical-rl]">Text</span>
            </button>
            <button type="button" aria-label="Add docker" className="flex h-7 items-center justify-center">
              <Plus s={14} />
            </button>
          </div>
        </div>
      </div>
    </section>
  );
}

/* ---------- color palettes ---------- */
const paletteA = ["#fcf3a0", "#ffadb9", "#faa5d6", "#bd93de", "#60cdec", "#70e3ca", "#979289", "#fbf2c0", "#fcced9", "#f9cce8", "#d6b6e8", "#8cdcf1", "#b0eddf", "#bab6ab", "#f7f8e5", "#fdeaea", "#f7e0ef", "#f0e7f1", "#c1ecf3", "#d2f4ea", "#c8c2ba", "#f8f5e8", "#fdf2ec", "#fdf3ed", "#f3eff2", "#eaf4ef", "#f3f8ef", "#deddd0", "#eceae5", "#e2dfd7", "#f0ede5", "#e2e3df", "#cfd1cd", "#c9ccc9", "#d6cfc8", "#fcf3a0"];
const paletteB = ["#231f20", "#414042", "#58595b", "#6d6e71", "#808285", "#939598", "#a7a9ac", "#bcbec0", "#d1d3d4", "#e6e7e8", "#ffffff", "#2e3192", "#00aeef", "#00a651", "#fff200", "#ed1c24", "#ec008c", "#e5a093", "#eacb7e", "#b9b6dc", "#faa874", "#eea8b3", "#e8b1bd", "#e9ceae", "#dbe4b6", "#acdcc4", "#b8d2ed", "#cacae4", "#c8d68a", "#94954f", "#6f8b35", "#96cef2", "#5499bc", "#278478", "#ea4e63", "#f0c4da"];
const paletteC = ["#000000", "#1a1a1a", "#333333", "#4d4d4d", "#666666", "#808080", "#999999", "#b3b3b3", "#cccccc", "#e6e6e6", "#ffffff", "#0000ff", "#00ffff", "#00ff00", "#ffff00", "#ff0000", "#ff00ff", "#9900cc", "#ff6600", "#ff99cc", "#663333", "#ccccff", "#9999ff", "#6699ff", "#6666ff", "#6666cc", "#003399", "#000066", "#336699", "#00ccff", "#99ffff", "#99cccc", "#669999", "#336666", "#003333", "#006633"];

const Grip = ({ className }) => (
  <div aria-hidden="true" className={className + " bg-[radial-gradient(#d6d6d6_1px,transparent_1px)] bg-[size:4px_4px]"} />
);

const Chev = ({ d, label, h, w = 11 }) => (
  <button type="button" aria-label={label} className={h + " flex w-full shrink-0 items-center justify-center"}>
    <svg width={w} height="9" viewBox={`0 0 ${w} 9`} fill="none" stroke="#b9b9b9" strokeWidth="2" aria-hidden="true">
      <path d={d} />
    </svg>
  </button>
);

function Palette({ colors, marks, light, selected, name }) {
  return (
    <aside aria-label={name} className="flex w-[25px] shrink-0 flex-col items-center border-l border-[#dadada] pt-0.5">
      <Grip className="h-1.5 w-5 shrink-0" />
      <button type="button" aria-label={name + " menu"} className="flex h-[22px] shrink-0 items-center">
        <svg width="5" height="9" aria-hidden="true">
          <path d="M0 0V9L5 4.500Z" fill="#555" />
        </svg>
      </button>
      <button type="button" aria-label={name + " eyedropper"} className="flex h-6 shrink-0 items-center">
        <Dropper s={17} light={light} />
      </button>
      <div className="h-[22px] w-full shrink-0 pb-0.5">
        <Chev label="Scroll up" h="h-[18px]" d="M1 7.500L5.500 2L10 7.500" />
      </div>
      <div className="flex min-h-0 w-[22px] flex-1 flex-col overflow-hidden border-x border-t border-[#858585]">
        <button type="button" aria-label="No color" className="h-[21px] shrink-0 border-b border-[#858585] bg-white">
          <svg width="20" height="20" aria-hidden="true">
            <path d="M3.500 17L16.500 3" stroke="#e66" strokeWidth="1.200" />
          </svg>
        </button>
        {colors.map((c, i) => (
          <button
            type="button"
            key={i}
            aria-label={c}
            className={
              "flex h-[21px] shrink-0 items-end p-px " +
              (i === selected ? (marks ? "border border-[#3c7a6c]" : "border-2 border-white") : "border-b border-black/40")
            }
            style={{ backgroundColor: c }}
          >
            {marks && <SpotMark />}
          </button>
        ))}
      </div>
      <Chev label="Scroll down" h="h-5" d="M1 2L5.500 7.500L10 2" />
      <Chev label="Expand palette" h="h-6" w={12} d="M1 0.500L5 4.500L1 8.500M6.500 0.500L10.500 4.500L6.500 8.500" />
      <div className="h-1.5 shrink-0" />
    </aside>
  );
}

const docColors = ["#000000", "#ff00ff", "#ff99cc", "#ff6600", "#e5a093", "#1a1a1a"];

function DocumentPalette() {
  return (
    <div className="flex h-[25px] shrink-0 items-center border-b border-[#dadada] pl-0.5">
      <Grip className="h-5 w-1.5" />
      <button type="button" aria-label="Palette menu" className="ml-[9px] mr-3.5">
        <svg width="5" height="9" aria-hidden="true">
          <path d="M0 0V9L5 4.500Z" fill="#555" />
        </svg>
      </button>
      <button type="button" aria-label="Palette eyedropper">
        <Dropper s={16} />
      </button>
      <div className="flex w-6 justify-center pl-0.5">
        <Chev label="Scroll left" h="h-5" w={9} d="M7 0L2 4.500L7 9" />
      </div>
      <div className="flex h-[22px] border border-[#777]">
        <button type="button" aria-label="No color" className="w-5 bg-white">
          <svg width="20" height="20" aria-hidden="true">
            <path d="M3.500 17L16.500 3" stroke="#e66" strokeWidth="1.200" />
          </svg>
        </button>
        {docColors.map((c) => (
          <button type="button" key={c} aria-label={c} className="w-[21px] border-l border-black/30" style={{ backgroundColor: c }} />
        ))}
      </div>
      <div className="ml-auto mr-2.5 flex gap-1.5">
        <div className="w-4">
          <Chev label="Scroll right" h="h-5" w={9} d="M2 0L7 4.500L2 9" />
        </div>
        <div className="w-4">
          <Chev label="More colors" h="h-5" w={12} d="M1 0.500L5 4.500L1 8.500M6.500 0.500L10.500 4.500L6.500 8.500" />
        </div>
      </div>
    </div>
  );
}

function StatusBar() {
  return (
    <footer className="flex h-[43px] shrink-0 items-center border-b-[3px] border-[#0b0b1e] pl-2 pt-0.5">
      <Btn label="Status options" corner>
        <Gear />
      </Btn>
      <span className="ml-1 w-[809px] text-[#454a45]">
        Click+drag outwards contours to the outside; click+drag inwards contours to the middle; click+drag to middle contours to the center
      </span>
      <span className="text-[#454a45]">Contour on Layer 1</span>
      <div className="ml-auto flex w-[254px] items-center">
        <Bucket />
        <svg width="26" height="26" className="ml-0.5 mr-1" aria-hidden="true">
          <rect x="0.500" y="0.500" width="25" height="25" fill="#fff" stroke="#999" />
          <path d="M1 25L25 1" stroke="#b00" strokeWidth="1.500" />
        </svg>
        None
      </div>
      <div className="flex w-[298px] items-center">
        <Pen />
        <span className="ml-1.5 mr-1 h-[26px] w-[25px] border-2 border-black bg-[#231f20] outline-1 -outline-offset-1 outline-[#888]" />
        <span>Black</span>
        <span className="ml-2">0,200 mm</span>
      </div>
      <div className="flex h-7 w-[42px] items-center border-l border-[#d4d4d4] pl-2.5">
        <Svg>
          <rect x="0.700" y="0.700" width="18.600" height="15" fill="#fff" stroke="#555" />
          <rect x="2" y="2" width="16" height="6" fill="#e8262d" stroke="none" />
          <rect x="2" y="9" width="16" height="5.500" fill="#19a3e6" stroke="none" />
          <circle cx="10" cy="8.500" r="3" fill="#ddd" stroke="#555" />
          <path d="M10 16V19M3 19.300H17" strokeWidth="1.600" />
        </Svg>
      </div>
    </footer>
  );
}

export default function App() {
  return (
    <div className="flex h-screen flex-col overflow-hidden bg-[#f3f3f3] font-['Noto_Sans',sans-serif] text-xs text-[#4a4d4a]">
      <TitleBar />
      <MenuBar />
      <StandardBar />
      <PropertyBar />
      <div className="flex min-h-0 flex-1">
        <Toolbox />
        <div className="flex min-w-0 flex-1 flex-col">
          <div className="flex min-h-0 flex-1">
            <Workspace />
            <ObjectsDocker />
          </div>
          <DocumentPalette />
        </div>
        <Palette name="Tints palette" colors={paletteA} marks light selected={5} />
        <Palette name="Default CMYK palette" colors={paletteB} selected={17} />
        <Palette name="Default RGB palette" colors={paletteC} selected={1} />
      </div>
      <StatusBar />
    </div>
  );
}
